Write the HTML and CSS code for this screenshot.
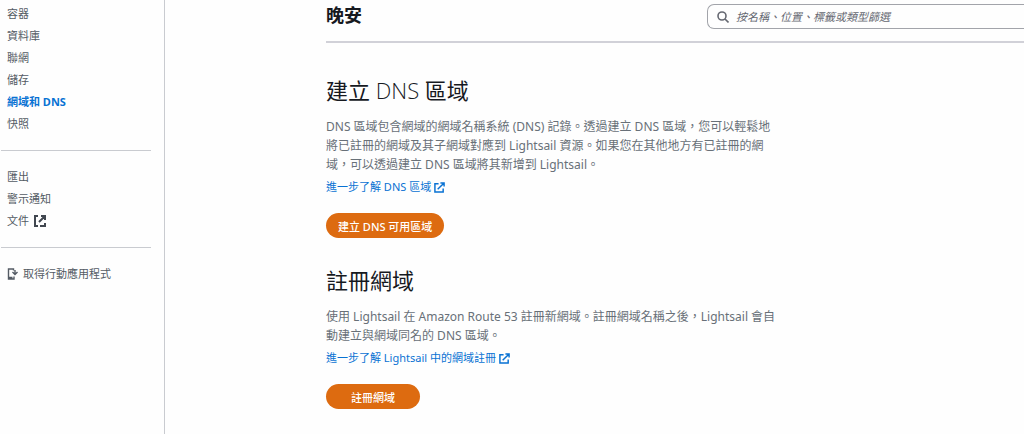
FILE: index.html
```html
<!DOCTYPE html>
<html lang="zh-Hant">
<head>
    <meta charset="UTF-8">
    <meta name="viewport" content="width=device-width, initial-scale=1.0">
    <title>Lightsail</title>
    <link rel="stylesheet" href="styles.css">
</head>
<body>
    <nav class="sidebar">
        <ul class="nav-group">
            <li><a href="#">容器</a></li>
            <li><a href="#">資料庫</a></li>
            <li><a href="#">聯網</a></li>
            <li><a href="#">儲存</a></li>
            <li><a href="#" class="active">網域和 DNS</a></li>
            <li><a href="#">快照</a></li>
        </ul>
        <ul class="nav-group">
            <li><a href="#">匯出</a></li>
            <li><a href="#">警示通知</a></li>
            <li><a href="#">文件
                <svg class="icon icon-nav" viewBox="0 0 12 12"><path d="M4 1H1v10h3M6 11h5V8M7 1h4v4M11 1L5 7"/></svg>
            </a></li>
        </ul>
        <ul class="nav-group">
            <li><a href="#" class="app-link">
                <svg class="icon icon-app" viewBox="0 0 11 12"><path d="M6.500 2.500V1H1.500v10h5.500V8.500M1.500 9.500h4M8 2v4M5.500 4l2.500 2.500L10.500 4"/></svg>
                取得行動應用程式
            </a></li>
        </ul>
    </nav>

    <main class="content">
        <header class="topbar">
            <h1>晚安</h1>
            <label class="search">
                <svg class="icon icon-search" viewBox="0 0 12 12"><circle cx="5" cy="5" r="4"/><path d="M8 8l3.500 3.500"/></svg>
                <input type="search" placeholder="按名稱、位置、標籤或類型篩選" aria-label="按名稱、位置、標籤或類型篩選">
            </label>
        </header>

        <section class="panel">
            <h2>建立 <span class="latin">DNS</span> 區域</h2>
            <p>DNS 區域包含網域的網域名稱系統 (DNS) 記錄。透過建立 DNS 區域，您可以輕鬆地將已註冊的網域及其子網域對應到 Lightsail 資源。如果您在其他地方有已註冊的網域，可以透過建立 DNS 區域將其新增到 Lightsail。</p>
            <a href="#" class="more">進一步了解 DNS 區域
                <svg class="icon icon-link" viewBox="0 0 12 12"><path d="M5 2H1v9h9V7M7 1h4v4M11 1L4 8"/></svg>
            </a>
            <button type="button" class="btn">建立 DNS 可用區域</button>
        </section>

        <section class="panel">
            <h2>註冊網域</h2>
            <p>使用 Lightsail 在 Amazon Route 53 註冊新網域。註冊網域名稱之後，Lightsail 會自動建立與網域同名的 DNS 區域。</p>
            <a href="#" class="more">進一步了解 Lightsail 中的網域註冊
                <svg class="icon icon-link" viewBox="0 0 12 12"><path d="M5 2H1v9h9V7M7 1h4v4M11 1L4 8"/></svg>
            </a>
            <button type="button" class="btn btn-wide">註冊網域</button>
        </section>
    </main>
</body>
</html>
```
FILE: styles.css
```css
* {
    box-sizing: border-box;
}
body {
    margin: 0;
    display: flex;
    min-height: 100vh;
    font-family: "Noto Sans", "Noto Sans CJK TC", sans-serif;
    font-size: 11px;
    color: #545b64;
    background: #fefefe;
}
h1, h2, p, ul {
    margin: 0;
    padding: 0;
}
a {
    color: inherit;
    text-decoration: none;
}
a:hover {
    text-decoration: underline;
}
.icon {
    fill: none;
    stroke: currentColor;
    flex: none;
}

.sidebar {
    width: 165px;
    flex: none;
    padding: 3px 13px 0 1px;
    border-right: 1px solid #c9cbd0;
}
.nav-group {
    list-style: none;
    padding: 0 6px 15px;
}
.nav-group + .nav-group {
    border-top: 1px solid #c9cbd0;
    padding-top: 15px;
}
.nav-group a {
    display: flex;
    align-items: center;
    gap: 5px;
    height: 22px;
    line-height: 22px;
}
.nav-group .active {
    color: #0972d3;
    font-weight: 700;
}
.icon-nav {
    width: 12px;
    height: 12px;
    stroke-width: 2;
    color: #414750;
}
.icon-app {
    width: 11px;
    height: 12px;
    stroke-width: 1.4;
}

.content {
    flex: 1;
    min-width: 0;
    padding-left: 161px;
}
.topbar {
    display: flex;
    justify-content: space-between;
    align-items: flex-start;
    height: 43px;
    overflow: hidden;
    border-bottom: 2px solid #d1d1d8;
}
h1 {
    font-size: 18px;
    line-height: 30px;
    color: #16191f;
}
.search {
    display: flex;
    align-items: center;
    gap: 7px;
    width: 317px;
    height: 25px;
    margin-top: 4px;
    padding-left: 9px;
    border: 1px solid #a2a4aa;
    border-right: 0;
    border-radius: 7px 0 0 7px;
}
.icon-search {
    width: 12px;
    height: 12px;
    stroke-width: 1.6;
    color: #656871;
}
.search input {
    flex: 1;
    min-width: 0;
    padding: 0;
    border: 0;
    outline: 0;
    background: none;
    font: inherit;
    color: #16191f;
}
.search input::placeholder {
    color: #656871;
    font-style: italic;
    opacity: 1;
}

.panel {
    display: flex;
    flex-direction: column;
    align-items: flex-start;
    padding-top: 31px;
}
.panel + .panel {
    padding-top: 26px;
}
h2 {
    font-size: 22px;
    line-height: 32px;
    font-weight: 400;
    color: #16191f;
}
.latin {
    font-family: "Open Sans", sans-serif;
    font-weight: 300;
}
.panel p {
    max-width: 456px;
    margin-top: 11px;
    font-size: 12px;
    line-height: 19px;
    color: #687078;
}
.more {
    display: flex;
    align-items: center;
    gap: 3px;
    margin-top: 2px;
    line-height: 22px;
    color: #0972d3;
}
.icon-link {
    width: 11px;
    height: 11px;
    stroke-width: 1.6;
}
.btn {
    height: 25px;
    margin-top: 15px;
    padding: 0 12px;
    border: 0;
    border-radius: 13px;
    background: #dd6b10;
    color: #fff;
    font: inherit;
    font-weight: 500;
    cursor: pointer;
}
.btn-wide {
    padding: 0 25px;
}
.btn:hover {
    background: #c25a08;
}
```
